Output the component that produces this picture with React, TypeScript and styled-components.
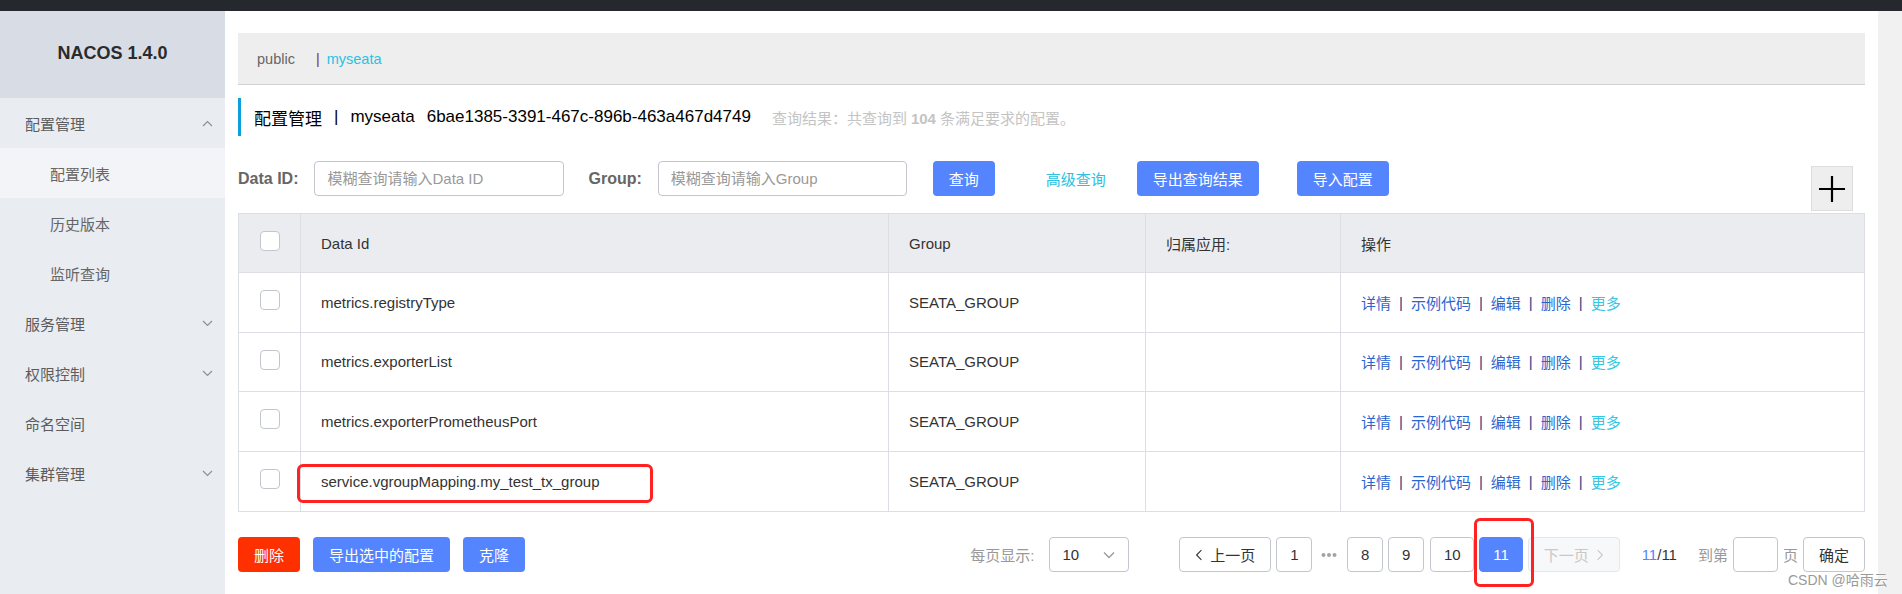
import React from "react";
import styled, { createGlobalStyle } from "styled-components";

const GlobalStyle = createGlobalStyle`
  html, body { margin: 0; padding: 0; background: #fff; }
  body {
    font-family: "Liberation Sans", "Noto Sans CJK SC", sans-serif;
    overflow: hidden;
  }
  * { box-sizing: border-box; }
`;

const Screen = styled.div`
  position: relative;
  width: 1902px;
  height: 594px;
  display: flex;
  flex-direction: column;
  background: #fff;
  overflow: hidden;
`;

const TopBar = styled.div`
  height: 11px;
  flex: none;
  background: #25282d;
`;

const Body = styled.div`
  flex: 1;
  display: flex;
  min-height: 0;
`;

/* ---------- sidebar ---------- */
const Sidebar = styled.aside`
  width: 225px;
  flex: none;
  background: #e9ecf1;
  display: flex;
  flex-direction: column;
`;

const Brand = styled.div`
  height: 87px;
  background: #d8dde5;
  display: flex;
  align-items: center;
  justify-content: center;
  font-size: 18px;
  font-weight: bold;
  color: #2b2b2b;
  padding-bottom: 2px;
`;

const MenuRow = styled.div<{ $sub?: boolean; $active?: boolean }>`
  height: 50px;
  display: flex;
  align-items: center;
  justify-content: space-between;
  padding: 0 12px 0 ${(p) => (p.$sub ? 50 : 25)}px;
  font-size: 15px;
  color: ${(p) => (p.$sub ? "#666" : "#5c5c5c")};
  background: ${(p) => (p.$active ? "#f2f4f7" : "transparent")};
`;

/* ---------- main ---------- */
const Main = styled.main`
  flex: 1;
  min-width: 0;
  padding: 22px 13px 0;
  display: flex;
  flex-direction: column;
`;

const Gutter = styled.div`
  width: 24px;
  flex: none;
  background: #f1f1f1;
`;

const Breadcrumb = styled.div`
  height: 52px;
  flex: none;
  background: #eeeeee;
  border-bottom: 1px solid #d2d2d2;
  display: flex;
  align-items: center;
  padding-left: 19px;
  font-size: 14.5px;
  color: #666;
`;

const CrumbSep = styled.span`
  color: #7d3b24;
  margin: 0 7px 0 21px;
`;

const CrumbLink = styled.span`
  color: #2bc1e0;
`;

const TitleBar = styled.div`
  margin-top: 13px;
  height: 38px;
  flex: none;
  border-left: 3px solid #0aa0dc;
  padding-left: 13px;
  display: flex;
  align-items: center;
  font-size: 17px;
  color: #000;
  white-space: nowrap;
`;

const TitleSep = styled.span`
  margin: 0 12px;
`;

const TitleId = styled.span`
  margin-left: 12px;
`;

const Summary = styled.span`
  margin-left: 21px;
  font-size: 15px;
  color: #c4c4c4;
  b { font-weight: bold; margin: 0 4px; }
`;

const SearchRow = styled.div`
  margin-top: 25px;
  height: 35px;
  flex: none;
  display: flex;
  align-items: center;
`;

const FieldLabel = styled.label<{ $ml?: number }>`
  font-size: 16px;
  font-weight: bold;
  color: #666;
  margin-left: ${(p) => p.$ml ?? 0}px;
  margin-right: 16px;
`;

const TextInput = styled.input<{ $w: number }>`
  width: ${(p) => p.$w}px;
  height: 35px;
  border: 1px solid #c4c6cf;
  border-radius: 4px;
  padding: 0 12px;
  font: inherit;
  font-size: 15px;
  color: #333;
  outline: none;
  &::placeholder { color: #999; }
`;

const Btn = styled.button<{ $danger?: boolean; $ml?: number }>`
  height: 35px;
  padding: 0 16px;
  border: none;
  border-radius: 4px;
  font: inherit;
  font-size: 15px;
  color: #fff;
  background: ${(p) => (p.$danger ? "#ff3000" : "#5584ff")};
  margin-left: ${(p) => p.$ml ?? 0}px;
  white-space: nowrap;
  cursor: pointer;
`;

const TextLink = styled.span<{ $ml?: number }>`
  font-size: 15px;
  color: #2bc1e0;
  margin-left: ${(p) => p.$ml ?? 0}px;
`;

const AddBox = styled.div`
  margin-left: auto;
  margin-right: 12px;
  align-self: flex-start;
  margin-top: 5px;
  width: 42px;
  height: 45px;
  flex: none;
  background: #eeeeee;
  border: 1px solid #dddddd;
  display: flex;
  align-items: center;
  justify-content: center;
`;

/* ---------- table ---------- */
const Table = styled.div`
  margin-top: 17px;
  border: 1px solid #dcdee3;
  flex: none;
`;

const Row = styled.div<{ $head?: boolean }>`
  display: grid;
  grid-template-columns: 61px 588px 257px 195px 1fr;
  height: ${(p) => (p.$head ? "59px" : "59.5px")};
  background: ${(p) => (p.$head ? "#ebecf0" : "#fff")};
  border-bottom: 1px solid #dcdee3;
  &:last-child { border-bottom: none; }
`;

const Cell = styled.div<{ $center?: boolean }>`
  display: flex;
  align-items: center;
  justify-content: ${(p) => (p.$center ? "center" : "flex-start")};
  padding: 0 ${(p) => (p.$center ? 0 : 20)}px;
  border-left: 1px solid #dcdee3;
  font-size: 15px;
  color: #333;
  white-space: nowrap;
  &:first-child { border-left: none; }
`;

const Check = styled.span`
  width: 20px;
  height: 20px;
  border: 1px solid #c4c6cf;
  border-radius: 4px;
  background: #fff;
  margin-bottom: 4px;
`;

const OpLink = styled.span<{ $more?: boolean }>`
  color: ${(p) => (p.$more ? "#36c6e6" : "#2b66cf")};
`;

const OpSep = styled.span`
  color: #1d3f8c;
  margin: 0 8px;
`;

/* ---------- footer ---------- */
const Footer = styled.div`
  margin-top: 25px;
  height: 35px;
  flex: none;
  display: flex;
  align-items: center;
`;

const Pager = styled.div`
  margin-left: auto;
  display: flex;
  align-items: center;
  font-size: 15px;
  color: #333;
`;

const MutedText = styled.span<{ $ml?: number }>`
  color: #999;
  margin-left: ${(p) => p.$ml ?? 0}px;
  white-space: nowrap;
`;

const Select = styled.div`
  margin-left: 15px;
  width: 80px;
  height: 35px;
  border: 1px solid #c4c6cf;
  border-radius: 4px;
  display: flex;
  align-items: center;
  justify-content: space-between;
  padding: 0 13px 0 12px;
  color: #333;
`;

const PageBtn = styled.div<{ $ml?: number; $current?: boolean; $disabled?: boolean }>`
  height: 35px;
  min-width: 34px;
  padding: 0 12.8px;
  margin-left: ${(p) => p.$ml ?? 5}px;
  border: 1px solid ${(p) => (p.$current ? "#5584ff" : p.$disabled ? "#e6e7eb" : "#c4c6cf")};
  border-radius: 4px;
  display: flex;
  align-items: center;
  justify-content: center;
  gap: 7px;
  background: ${(p) => (p.$current ? "#5584ff" : p.$disabled ? "#f7f8fa" : "#fff")};
  color: ${(p) => (p.$current ? "#fff" : p.$disabled ? "#c8c8c8" : "#333")};
  white-space: nowrap;
`;

const NavBtn = styled(PageBtn)`
  padding: 0 15px;
  width: 92px;
`;

const Dots = styled.span`
  display: flex;
  margin: 0 10px 0 9px;
`;

const PageCount = styled.span`
  margin-left: 22px;
  color: #333;
  em { font-style: normal; color: #5584ff; }
`;

const JumpInput = styled.div`
  margin-left: 5px;
  width: 45px;
  height: 35px;
  border: 1px solid #c4c6cf;
  border-radius: 4px;
`;

const ConfirmBtn = styled.div`
  margin-left: 5px;
  width: 62px;
  height: 35px;
  border: 1px solid #c4c6cf;
  border-radius: 4px;
  display: flex;
  align-items: center;
  justify-content: center;
  color: #333;
`;

/* ---------- overlays ---------- */
const Mark = styled.div<{ $x: number; $y: number; $w: number; $h: number }>`
  position: absolute;
  left: ${(p) => p.$x}px;
  top: ${(p) => p.$y}px;
  width: ${(p) => p.$w}px;
  height: ${(p) => p.$h}px;
  border: 3px solid #ff2222;
  border-radius: 6px;
  pointer-events: none;
`;

const Watermark = styled.div`
  position: absolute;
  left: 1788px;
  top: 569px;
  font-size: 14px;
  color: #9a9a9a;
  text-shadow: 0 0 2px #fff, 0 0 2px #fff;
  white-space: nowrap;
`;

/* ---------- icons ---------- */
const Chevron = ({ up, color = "#8a8f99" }: { up?: boolean; color?: string }) => (
  <svg width="11" height="7" viewBox="0 0 11 7">
    <polyline
      points={up ? "1,6 5.5,1.5 10,6" : "1,1 5.5,5.5 10,1"}
      fill="none"
      stroke={color}
      strokeWidth="1.2"
    />
  </svg>
);

const Side = ({ dir, color }: { dir: "l" | "r"; color: string }) => (
  <svg width="10" height="14" viewBox="0 0 10 14">
    <polyline
      points={dir === "l" ? "8,1 2,7 8,13" : "2,1 8,7 2,13"}
      fill="none"
      stroke={color}
      strokeWidth="1.4"
    />
  </svg>
);

const Plus = () => (
  <svg width="26" height="26" viewBox="0 0 26 26">
    <path d="M13 0 V26 M0 13 H26" stroke="#000" strokeWidth="2.2" />
  </svg>
);

const menu = [
  { label: "配置管理", chevron: "up" },
  { label: "配置列表", sub: true, active: true },
  { label: "历史版本", sub: true },
  { label: "监听查询", sub: true },
  { label: "服务管理", chevron: "down" },
  { label: "权限控制", chevron: "down" },
  { label: "命名空间" },
  { label: "集群管理", chevron: "down" },
];

const rows = [
  "metrics.registryType",
  "metrics.exporterList",
  "metrics.exporterPrometheusPort",
  "service.vgroupMapping.my_test_tx_group",
];

const Ops = () => (
  <>
    <OpLink>详情</OpLink>
    <OpSep>|</OpSep>
    <OpLink>示例代码</OpLink>
    <OpSep>|</OpSep>
    <OpLink>编辑</OpLink>
    <OpSep>|</OpSep>
    <OpLink>删除</OpLink>
    <OpSep>|</OpSep>
    <OpLink $more>更多</OpLink>
  </>
);

export default function App() {
  return (
    <Screen>
      <GlobalStyle />
      <TopBar />
      <Body>
        <Sidebar>
          <Brand>NACOS 1.4.0</Brand>
          {menu.map((m) => (
            <MenuRow key={m.label} $sub={m.sub} $active={m.active}>
              <span>{m.label}</span>
              {m.chevron && <Chevron up={m.chevron === "up"} />}
            </MenuRow>
          ))}
        </Sidebar>

        <Main>
          <Breadcrumb>
            <span>public</span>
            <CrumbSep>|</CrumbSep>
            <CrumbLink>myseata</CrumbLink>
          </Breadcrumb>

          <TitleBar>
            <span>配置管理</span>
            <TitleSep>|</TitleSep>
            <span>myseata</span>
            <TitleId>6bae1385-3391-467c-896b-463a467d4749</TitleId>
            <Summary>
              查询结果：共查询到<b>104</b>条满足要求的配置。
            </Summary>
          </TitleBar>

          <SearchRow>
            <FieldLabel>Data ID:</FieldLabel>
            <TextInput $w={250} placeholder="模糊查询请输入Data ID" />
            <FieldLabel $ml={24}>Group:</FieldLabel>
            <TextInput $w={249} placeholder="模糊查询请输入Group" />
            <Btn $ml={26}>查询</Btn>
            <TextLink $ml={51}>高级查询</TextLink>
            <Btn $ml={31}>导出查询结果</Btn>
            <Btn $ml={38}>导入配置</Btn>
            <AddBox>
              <Plus />
            </AddBox>
          </SearchRow>

          <Table>
            <Row $head>
              <Cell $center>
                <Check />
              </Cell>
              <Cell>Data Id</Cell>
              <Cell>Group</Cell>
              <Cell>归属应用:</Cell>
              <Cell>操作</Cell>
            </Row>
            {rows.map((r) => (
              <Row key={r}>
                <Cell $center>
                  <Check />
                </Cell>
                <Cell>{r}</Cell>
                <Cell>SEATA_GROUP</Cell>
                <Cell />
                <Cell>
                  <Ops />
                </Cell>
              </Row>
            ))}
          </Table>

          <Footer>
            <Btn $danger>删除</Btn>
            <Btn $ml={13}>导出选中的配置</Btn>
            <Btn $ml={13}>克隆</Btn>
            <Pager>
              <MutedText>每页显示:</MutedText>
              <Select>
                <span>10</span>
                <svg width="12" height="8" viewBox="0 0 12 8">
                  <polyline points="1,1.5 6,6.5 11,1.5" fill="none" stroke="#999" strokeWidth="1.3" />
                </svg>
              </Select>
              <NavBtn $ml={50}>
                <Side dir="l" color="#333" />
                <span>上一页</span>
              </NavBtn>
              <PageBtn>1</PageBtn>
              <Dots>
                <svg width="16" height="6" viewBox="0 0 16 6">
                  <circle cx="2.5" cy="3" r="2" fill="#a3a3a3" />
                  <circle cx="8" cy="3" r="2" fill="#a3a3a3" />
                  <circle cx="13.5" cy="3" r="2" fill="#a3a3a3" />
                </svg>
              </Dots>
              <PageBtn $ml={0}>8</PageBtn>
              <PageBtn>9</PageBtn>
              <PageBtn $ml={6}>10</PageBtn>
              <PageBtn $current>11</PageBtn>
              <NavBtn $disabled>
                <span>下一页</span>
                <Side dir="r" color="#c8c8c8" />
              </NavBtn>
              <PageCount>
                <em>11</em>/11
              </PageCount>
              <MutedText $ml={21}>到第</MutedText>
              <JumpInput />
              <MutedText $ml={5}>页</MutedText>
              <ConfirmBtn>确定</ConfirmBtn>
            </Pager>
          </Footer>
        </Main>
        <Gutter />
      </Body>

      <Mark $x={297} $y={464} $w={356} $h={39} />
      <Mark $x={1474} $y={518} $w={60} $h={69} />
      <Watermark>CSDN @哈雨云</Watermark>
    </Screen>
  );
}
